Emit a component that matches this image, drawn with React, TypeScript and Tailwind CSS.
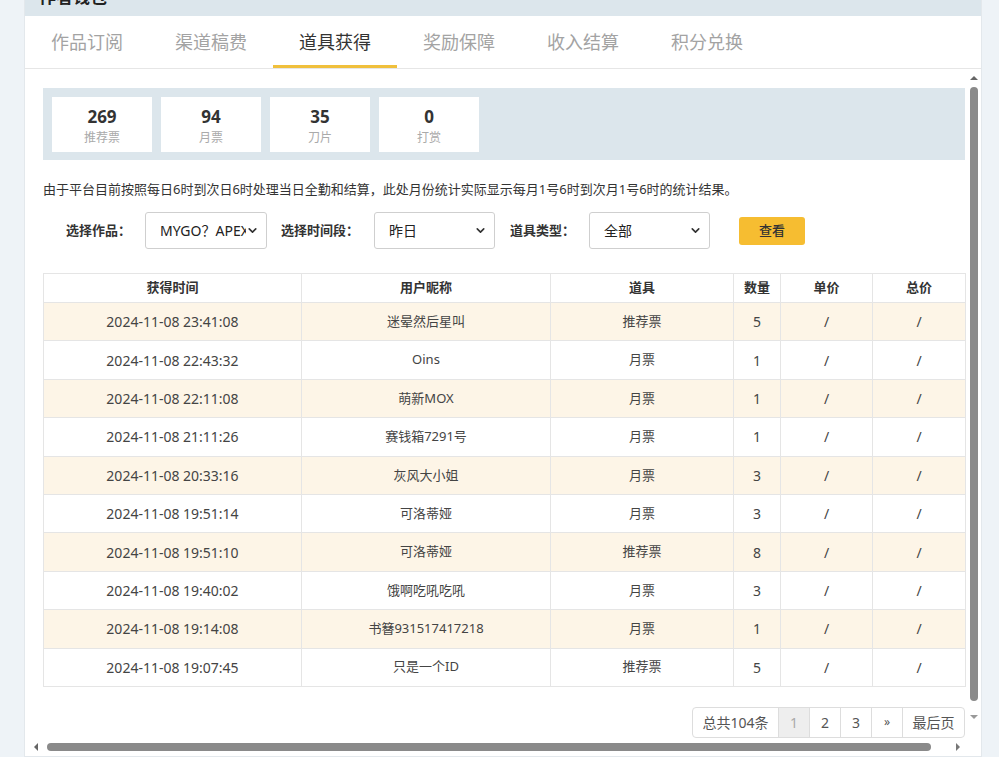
import { ChevronDown } from 'lucide-react';

const tabs = ['作品订阅', '渠道稿费', '道具获得', '奖励保障', '收入结算', '积分兑换'];

const stats = [
  { value: '269', label: '推荐票' },
  { value: '94', label: '月票' },
  { value: '35', label: '刀片' },
  { value: '0', label: '打赏' },
];

const rows = [
  ['2024-11-08 23:41:08', '迷晕然后星叫', '推荐票', '5'],
  ['2024-11-08 22:43:32', 'Oins', '月票', '1'],
  ['2024-11-08 22:11:08', '萌新MOX', '月票', '1'],
  ['2024-11-08 21:11:26', '赛钱箱7291号', '月票', '1'],
  ['2024-11-08 20:33:16', '灰风大小姐', '月票', '3'],
  ['2024-11-08 19:51:14', '可洛蒂娅', '月票', '3'],
  ['2024-11-08 19:51:10', '可洛蒂娅', '推荐票', '8'],
  ['2024-11-08 19:40:02', '饿啊吃吼吃吼', '月票', '3'],
  ['2024-11-08 19:14:08', '书簮931517417218', '月票', '1'],
  ['2024-11-08 19:07:45', '只是一个ID', '推荐票', '5'],
];

const headers = [
  { label: '获得时间', w: 'w-[258px]' },
  { label: '用户昵称', w: 'w-[249px]' },
  { label: '道具', w: 'w-[183px]' },
  { label: '数量', w: 'w-[47px]' },
  { label: '单价', w: 'w-[92px]' },
  { label: '总价', w: 'w-[93px]' },
];

function FakeSelect({ text, width }: { text: string; width: string }) {
  return (
    <div
      className={`${width} h-[37px] flex items-center justify-between border border-[#cfcfcf] rounded-[3px] bg-white pl-[14px] pr-[7px] text-[14px] text-[#222] overflow-hidden whitespace-nowrap shrink-0`}
    >
      <span className="overflow-hidden">{text}</span>
      <ChevronDown size={13} strokeWidth={3} className="shrink-0 text-[#333]" />
    </div>
  );
}

export default function App() {
  return (
    <div
      className="w-[999px] h-[757px] overflow-hidden bg-[#eef3f7] pl-[24px] pr-[17px]"
      style={{ fontFamily: '"Noto Sans", "Noto Sans CJK SC", sans-serif' }}
    >
      <div className="h-[757px] flex flex-col bg-white border-x border-b border-[#e3e8ec]">
        {/* title strip, cut off at top */}
        <div className="h-[16px] bg-[#dce6ec] overflow-hidden pl-[14px]">
          <div className="mt-[-15px] text-[17px] font-bold text-[#222] leading-[24px]">作者钱包</div>
        </div>

        {/* tabs */}
        <div className="h-[53px] flex border-b border-[#e6e6e6] shrink-0">
          {tabs.map((t, i) => (
            <div
              key={t}
              className={`w-[124px] flex items-center justify-center text-[18px] ${
                i === 2 ? 'text-[#333] border-b-[3px] border-[#f0c03c] pt-[3px]' : 'text-[#a3a3a3]'
              }`}
            >
              {t}
            </div>
          ))}
        </div>

        {/* scroll area */}
        <div className="flex-1 flex flex-col min-h-0">
          <div className="flex-1 flex min-h-0">
            <div className="flex-1 pl-[18px] pr-[2px] pt-[19px] overflow-hidden">
              <div className="w-[922px]">
                <div className="h-[72px] bg-[#dce6ec] flex gap-[9px] p-[9px]">
                  {stats.map((s) => (
                    <div key={s.label} className="w-[100px] h-[55px] bg-white flex flex-col items-center pt-[9px]">
                      <div className="text-[17px] font-bold text-[#333] leading-[22px]">{s.value}</div>
                      <div className="mt-[2px] text-[12px] text-[#aaa] leading-[16px]">{s.label}</div>
                    </div>
                  ))}
                </div>

                <div className="mt-[19px] text-[13px] text-[#333] leading-[20px]">
                  由于平台目前按照每日6时到次日6时处理当日全勤和结算，此处月份统计实际显示每月1号6时到次月1号6时的统计结果。
                </div>

                <div className="mt-[13px] flex items-center text-[13px]">
                  <span className="ml-[23px] mr-[14px] font-bold text-[#333] whitespace-nowrap">选择作品：</span>
                  <FakeSelect text="MYGO？APEX" width="w-[122px]" />
                  <span className="ml-[14px] mr-[15px] font-bold text-[#333] whitespace-nowrap">选择时间段：</span>
                  <FakeSelect text="昨日" width="w-[121px]" />
                  <span className="ml-[15px] mr-[14px] font-bold text-[#333] whitespace-nowrap">道具类型：</span>
                  <FakeSelect text="全部" width="w-[121px]" />
                  <button className="ml-[29px] w-[66px] h-[28px] rounded-[3px] bg-[#f6bd31] text-[13px] font-medium text-[#333] shrink-0">
                    查看
                  </button>
                </div>

                <table className="mt-[24px] w-[922px] border-collapse table-fixed">
                  <thead>
                    <tr className="h-[29px]">
                      {headers.map((h) => (
                        <th
                          key={h.label}
                          className={`${h.w} border border-[#e5e5e5] text-[13px] font-bold text-[#333] text-center p-0`}
                        >
                          {h.label}
                        </th>
                      ))}
                    </tr>
                  </thead>
                  <tbody>
                    {rows.map((r, i) => (
                      <tr key={i} className={`h-[38.4px] ${i % 2 === 0 ? 'bg-[#fdf5e7]' : 'bg-white'}`}>
                        <td className="border border-[#e5e5e5] text-center text-[14px] text-[#444] p-0">{r[0]}</td>
                        <td className="border border-[#e5e5e5] text-center text-[13px] text-[#444] p-0">{r[1]}</td>
                        <td className="border border-[#e5e5e5] text-center text-[13px] text-[#444] p-0">{r[2]}</td>
                        <td className="border border-[#e5e5e5] text-center text-[14px] text-[#444] p-0">{r[3]}</td>
                        <td className="border border-[#e5e5e5] text-center text-[14px] text-[#444] p-0">/</td>
                        <td className="border border-[#e5e5e5] text-center text-[14px] text-[#444] p-0">/</td>
                      </tr>
                    ))}
                  </tbody>
                </table>

                <div className="mt-[20px] flex justify-end">
                  <div className="flex h-[31px] border border-[#ddd] rounded-[4px] text-[14px] text-[#555] overflow-hidden">
                    <div className="w-[85px] flex items-center justify-center">总共104条</div>
                    <div className="w-[31px] flex items-center justify-center border-l border-[#ddd] bg-[#eee] text-[#aaa]">1</div>
                    <div className="w-[31px] flex items-center justify-center border-l border-[#ddd]">2</div>
                    <div className="w-[31px] flex items-center justify-center border-l border-[#ddd]">3</div>
                    <div className="w-[31px] flex items-center justify-center border-l border-[#ddd] text-[12px]">»</div>
                    <div className="w-[62px] flex items-center justify-center border-l border-[#ddd]">最后页</div>
                  </div>
                </div>
              </div>
            </div>

            {/* vertical scrollbar */}
            <div className="w-[15px] shrink-0 flex flex-col items-center pt-[7px]">
              <div className="w-0 h-0 border-x-[4px] border-x-transparent border-b-[4px] border-b-[#666]" />
              <div className="mt-[7px] w-[8px] h-[614px] rounded-full bg-[#8a8a8a]" />
              <div className="mt-[14px] w-0 h-0 border-x-[4px] border-x-transparent border-t-[4px] border-t-[#999]" />
            </div>
          </div>

          {/* horizontal scrollbar */}
          <div className="h-[18px] shrink-0 flex items-center pl-[9px]">
            <div className="w-0 h-0 border-y-[4px] border-y-transparent border-r-[4px] border-r-[#666]" />
            <div className="ml-[9px] w-[884px] h-[8px] rounded-full bg-[#8a8a8a] shrink-0" />
            <div className="ml-[25px] w-0 h-0 border-y-[4px] border-y-transparent border-l-[4px] border-l-[#777]" />
          </div>
        </div>
      </div>
    </div>
  );
}
